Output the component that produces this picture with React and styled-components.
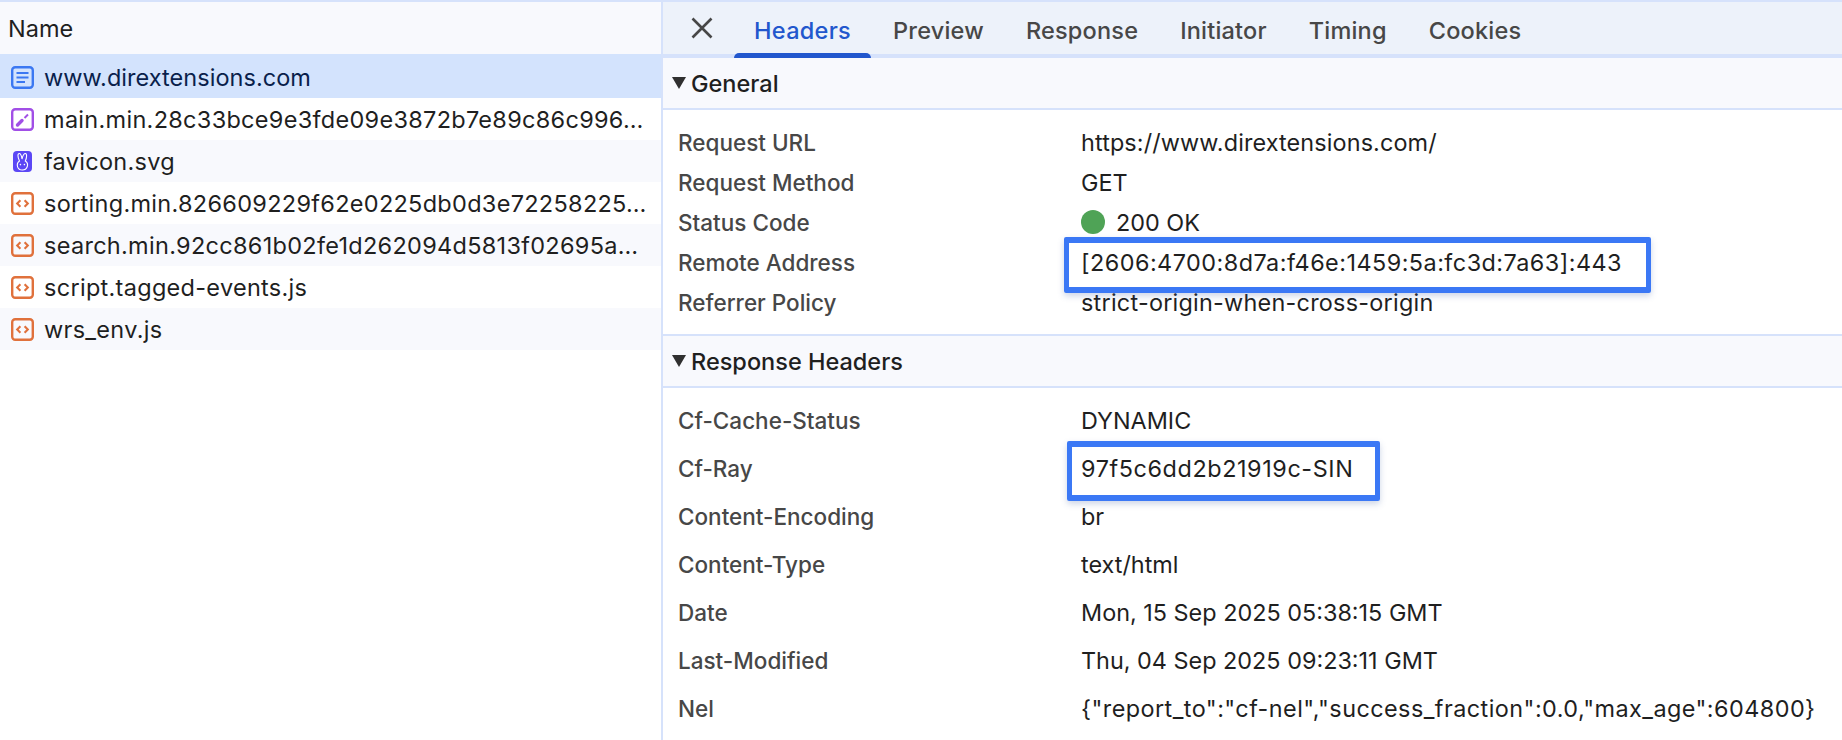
import React from 'react'
import styled, { createGlobalStyle } from 'styled-components'

const GlobalStyle = createGlobalStyle`
  html, body {
    margin: 0;
    padding: 0;
    height: 100%;
    background: #fff;
    overflow: hidden;
  }
  body {
    font-family: Inter, "Liberation Sans", sans-serif;
    color: #1f1f1f;
  }
`

const Page = styled.div`
  display: flex;
  width: 1842px;
  height: 740px;
  box-sizing: border-box;
  border-top: 2px solid #d6e2fb;
  overflow: hidden;
`

const Sidebar = styled.div`
  width: 661px;
  flex: none;
  display: flex;
  flex-direction: column;
`

const NameHeader = styled.div`
  height: 52px;
  flex: none;
  display: flex;
  align-items: center;
  padding-left: 8px;
  background: #f8f9fd;
  font-size: 23.5px;
  color: #1f1f1f;
`

const FileRow = styled.div`
  height: ${p => (p.$selected ? 44 : 42)}px;
  box-sizing: border-box;
  flex: none;
  display: flex;
  align-items: center;
  gap: 10px;
  padding: ${p => (p.$selected ? '2px' : '0')} 0 0 11px;
  font-size: 23.5px;
  letter-spacing: ${p => (p.$selected ? 0.04 : 0.29)}px;
  white-space: nowrap;
  background: ${p => (p.$selected ? '#d3e3fd' : p.$odd ? '#f8f9fd' : '#fff')};
  color: ${p => (p.$selected ? '#0a1f4c' : '#1f1f1f')};
`

const IconSvg = styled.svg`
  width: 23px;
  height: 23px;
  flex: none;
`

const DocIcon = () => (
  <IconSvg viewBox="0 0 23 23" fill="none">
    <rect x="1.2" y="1.2" width="20.6" height="20.6" rx="3" stroke="#3b78f2" strokeWidth="2.4" />
    <path d="M5.5 7h12M5.5 11.5h12M5.5 16h8.5" stroke="#3b78f2" strokeWidth="2.2" />
  </IconSvg>
)

const StyleIcon = () => (
  <IconSvg viewBox="0 0 23 23" fill="none">
    <rect x="1.2" y="1.2" width="20.6" height="20.6" rx="3" stroke="#a14fe6" strokeWidth="2.4" />
    <path d="M6.5 17 L11 12.5" stroke="#a14fe6" strokeWidth="3.4" strokeLinecap="round" />
    <path d="M13.5 10 L17 6.5" stroke="#a14fe6" strokeWidth="2" />
  </IconSvg>
)

const FaviconIcon = () => (
  <IconSvg viewBox="0 0 23 23" fill="none">
    <rect x="2" y="1" width="19" height="21" rx="4" fill="#5b47f5" />
    <path
      d="M8.5 11 C6.5 7 6.5 3.5 8.3 3.5 C9.8 3.5 10.6 6.5 11 9 C11.6 6.5 12.6 3.5 14.4 3.5 C16 3.5 16 7.5 14.3 11 C16.4 12.4 17 14.6 16.2 16.8 C15.3 19.3 13.5 20 11.4 20 C9.2 20 7.4 19.3 6.6 16.8 C5.9 14.6 6.4 12.4 8.5 11 Z"
      stroke="#fff"
      strokeWidth="1.1"
    />
    <circle cx="9.4" cy="14.6" r="0.8" fill="#fff" />
    <circle cx="13.4" cy="14.6" r="0.8" fill="#fff" />
  </IconSvg>
)

const ScriptIcon = () => (
  <IconSvg viewBox="0 0 23 23" fill="none">
    <rect x="1.2" y="1.2" width="20.6" height="20.6" rx="3" stroke="#e0713c" strokeWidth="2.4" />
    <path d="M9.4 8.2 L6.2 11.5 L9.4 14.8 M13.6 8.2 L16.8 11.5 L13.6 14.8" stroke="#e0713c" strokeWidth="2.1" />
  </IconSvg>
)

const Detail = styled.div`
  flex: 1;
  display: flex;
  flex-direction: column;
  border-left: 2px solid #d6e2fb;
`

const TabBar = styled.div`
  height: 52px;
  flex: none;
  display: flex;
  align-items: stretch;
  background: #edf2fa;
  border-bottom: 4px solid #d6e2fb;
  padding-left: 27px;
`

const CloseButton = styled.div`
  width: 24px;
  margin-right: 20px;
  display: flex;
  align-items: center;
  justify-content: center;
`

const Tab = styled.div`
  display: flex;
  align-items: center;
  padding: 4px 20px 0;
  margin-right: 2px;
  position: relative;
  font-size: 23.5px;
  font-weight: 500;
  letter-spacing: ${p => (p.$active ? 0.3 : 0.2)}px;
  color: ${p => (p.$active ? '#2257cd' : '#474747')};

  ${p => p.$active && `
    &::after {
      content: '';
      position: absolute;
      left: 0;
      right: 0;
      bottom: -4px;
      height: 5px;
      background: #2257cd;
      border-radius: 5px 5px 0 0;
    }
  `}
`

const SectionHeader = styled.div`
  height: 52px;
  flex: none;
  display: flex;
  align-items: center;
  gap: 5px;
  padding-left: 9px;
  box-sizing: border-box;
  background: #f8f9fd;
  border-bottom: 2px solid #d6e2fb;
  font-size: 23.5px;
  font-weight: 500;
  color: #1f1f1f;
`

const Arrow = styled.span`
  width: 0;
  height: 0;
  border-left: 7px solid transparent;
  border-right: 7px solid transparent;
  border-top: 12px solid #303030;
`

const RowList = styled.div`
  flex: none;
  display: flex;
  flex-direction: column;
  padding: ${p => p.$pad};
  ${p => p.$ruled && 'border-bottom: 2px solid #d6e2fb;'}
`

const InfoRow = styled.div`
  display: flex;
  align-items: center;
  height: ${p => p.$height}px;
  white-space: nowrap;
`

const Label = styled.div`
  width: 403px;
  flex: none;
  padding-left: 15px;
  font-size: 22.5px;
  font-weight: 500;
  color: #474747;
`

const Value = styled.div`
  display: flex;
  align-items: center;
  gap: 11px;
  font-size: 23.4px;
  letter-spacing: ${p => p.$spacing || 0}px;
  color: #1f1f1f;
`

const StatusDot = styled.span`
  width: 24px;
  height: 24px;
  border-radius: 50%;
  background: #4fa356;
`

const Highlight = styled.span`
  position: relative;

  &::after {
    content: '';
    position: absolute;
    left: ${p => p.$left}px;
    right: ${p => p.$right}px;
    top: ${p => p.$top}px;
    bottom: ${p => p.$bottom}px;
    border-style: solid;
    border-color: #3b78f5;
    border-width: 6px 5px;
    border-radius: 2px;
    box-shadow: 0 3px 6px rgba(60, 90, 160, 0.25);
    pointer-events: none;
  }
`

const files = [
  { name: 'www.dirextensions.com', Icon: DocIcon, selected: true },
  { name: 'main.min.28c33bce9e3fde09e3872b7e89c86c996…', Icon: StyleIcon },
  { name: 'favicon.svg', Icon: FaviconIcon },
  { name: 'sorting.min.826609229f62e0225db0d3e72258225…', Icon: ScriptIcon },
  { name: 'search.min.92cc861b02fe1d262094d5813f02695a…', Icon: ScriptIcon },
  { name: 'script.tagged-events.js', Icon: ScriptIcon },
  { name: 'wrs_env.js', Icon: ScriptIcon },
]

const tabs = ['Headers', 'Preview', 'Response', 'Initiator', 'Timing', 'Cookies']

const App = () => {
  return (
    <>
      <GlobalStyle />
      <Page>
        <Sidebar>
          <NameHeader>Name</NameHeader>
          {files.map((f, i) => (
            <FileRow key={f.name} $selected={f.selected} $odd={i % 2 === 0}>
              <f.Icon />
              {f.name}
            </FileRow>
          ))}
        </Sidebar>
        <Detail>
          <TabBar>
            <CloseButton>
              <svg width="22" height="22" viewBox="0 0 22 22" fill="none">
                <path d="M1.5 1.5L20.5 20.5M20.5 1.5L1.5 20.5" stroke="#474747" strokeWidth="2.6" />
              </svg>
            </CloseButton>
            {tabs.map((t, i) => (
              <Tab key={t} $active={i === 0}>{t}</Tab>
            ))}
          </TabBar>
          <SectionHeader><Arrow />General</SectionHeader>
          <RowList $pad="12px 0 12px" $ruled>
            <InfoRow $height={40}><Label>Request URL</Label><Value $spacing={0.12}>https://www.dirextensions.com/</Value></InfoRow>
            <InfoRow $height={40}><Label>Request Method</Label><Value>GET</Value></InfoRow>
            <InfoRow $height={40}><Label>Status Code</Label><Value><StatusDot />200 OK</Value></InfoRow>
            <InfoRow $height={40}>
              <Label>Remote Address</Label>
              <Value $spacing={0.47}><Highlight $left={-17} $right={-29} $top={-11} $bottom={-16}>[2606:4700:8d7a:f46e:1459:5a:fc3d:7a63]:443</Highlight></Value>
            </InfoRow>
            <InfoRow $height={40}><Label>Referrer Policy</Label><Value $spacing={0.25}>strict-origin-when-cross-origin</Value></InfoRow>
          </RowList>
          <SectionHeader><Arrow />Response Headers</SectionHeader>
          <RowList $pad="8px 0 0">
            <InfoRow $height={48}><Label>Cf-Cache-Status</Label><Value>DYNAMIC</Value></InfoRow>
            <InfoRow $height={48}>
              <Label>Cf-Ray</Label>
              <Value $spacing={0.59}><Highlight $left={-14} $right={-27} $top={-13} $bottom={-18}>97f5c6dd2b21919c-SIN</Highlight></Value>
            </InfoRow>
            <InfoRow $height={48}><Label>Content-Encoding</Label><Value>br</Value></InfoRow>
            <InfoRow $height={48}><Label>Content-Type</Label><Value>text/html</Value></InfoRow>
            <InfoRow $height={48}><Label>Date</Label><Value>Mon, 15 Sep 2025 05:38:15 GMT</Value></InfoRow>
            <InfoRow $height={48}><Label>Last-Modified</Label><Value>Thu, 04 Sep 2025 09:23:11 GMT</Value></InfoRow>
            <InfoRow $height={48}><Label>Nel</Label><Value $spacing={0.45}>{'{"report_to":"cf-nel","success_fraction":0.0,"max_age":604800}'}</Value></InfoRow>
          </RowList>
        </Detail>
      </Page>
    </>
  )
}

export default App
